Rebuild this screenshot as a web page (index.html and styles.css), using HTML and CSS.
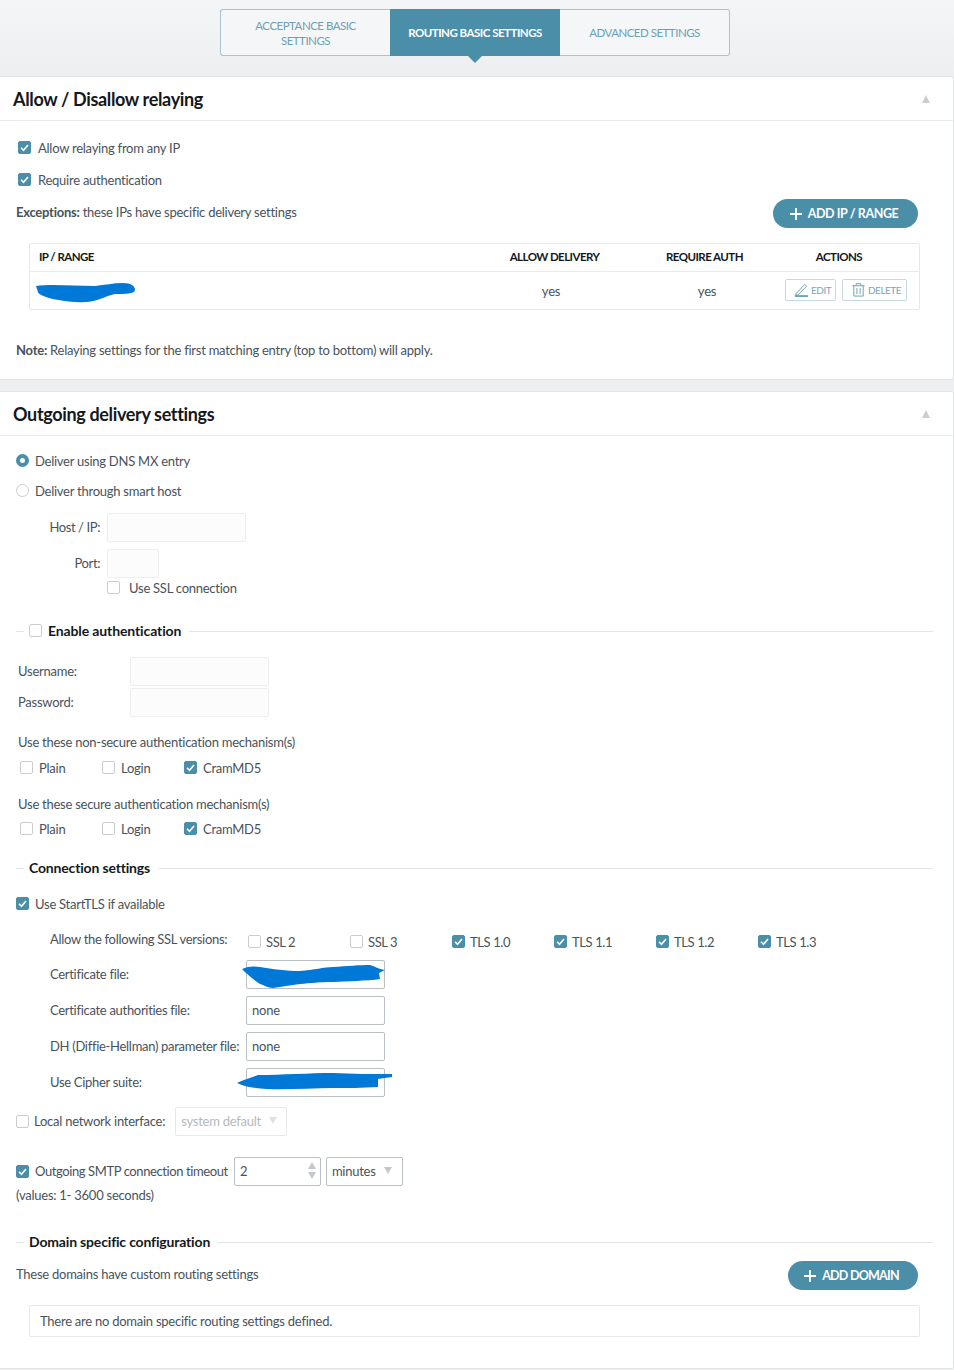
FILE: index.html
```html
<!DOCTYPE html>
<html lang="en">
<head>
<meta charset="utf-8">
<title>Routing basic settings</title>
<link rel="stylesheet" href="styles.css">
</head>
<body>
<nav class="tabs">
  <a class="tab">ACCEPTANCE BASIC<br>SETTINGS</a>
  <a class="tab tab-active">ROUTING BASIC SETTINGS</a>
  <a class="tab">ADVANCED SETTINGS</a>
</nav>

<section class="panel panel-relay">
  <header class="panel-head"><h2>Allow / Disallow relaying</h2><span class="collapse"></span></header>
  <div class="relay-body">
    <label class="row indent-2"><span class="cb on"><svg viewBox="0 0 13 13"><path d="M3 6.8l2.5 2.5L10 4"/></svg></span>Allow relaying from any IP</label>
    <label class="row indent-2 mt-12"><span class="cb on"><svg viewBox="0 0 13 13"><path d="M3 6.8l2.5 2.5L10 4"/></svg></span>Require authentication</label>
    <div class="row-between exceptions">
      <p class="lift"><b>Exceptions:</b> these IPs have specific delivery settings</p>
      <button class="pill pill-ip"><svg viewBox="0 0 14 14"><path d="M7 1v12M1 7h12"/></svg>ADD IP / RANGE</button>
    </div>
    <div class="grid-table">
      <div class="cell-head left">IP / RANGE</div>
      <div class="cell-head">ALLOW DELIVERY</div>
      <div class="cell-head">REQUIRE AUTH</div>
      <div class="cell-head actions-head">ACTIONS</div>
      <div class="cell cell-ip"><svg class="scrib-ip" viewBox="0 0 100 20"><path d="M1 3C15 1 40 3 60 3 70 2 78 0 88 0 96 0 100 3 100 7 100 11 90 11 80 11 70 13 62 19 50 19 38 20 22 17 14 15 8 13 3 11 3 9Z"/></svg></div>
      <div class="cell yes-a">yes</div>
      <div class="cell yes-b">yes</div>
      <div class="cell cell-actions">
        <button class="mini mini-edit"><svg viewBox="0 0 16 16"><path d="M2 12.5 11.5 2.5l2 2L4 14H2z"/><path class="base" d="M1 15h14"/></svg>EDIT</button>
        <button class="mini mini-del"><svg viewBox="0 0 16 16"><path d="M1.5 4h13M5.5 4V1.8h5V4M3 4v11h10V4M6.3 6.5v6.5M9.7 6.5v6.5"/></svg>DELETE</button>
      </div>
    </div>
    <p class="note"><b>Note:</b> Relaying settings for the first matching entry (top to bottom) will apply.</p>
  </div>
</section>

<section class="panel panel-out">
  <header class="panel-head"><h2>Outgoing delivery settings</h2><span class="collapse"></span></header>
  <div class="out-body">
    <label class="row radio-first"><span class="radio on"></span>Deliver using DNS MX entry</label>
    <label class="row mt-10"><span class="radio"></span>Deliver through smart host</label>

    <div class="host-row"><span class="host-label">Host / IP:</span><span class="input faint w-139"></span></div>
    <div class="host-row port-row"><span class="host-label">Port:</span><span class="input faint w-52"></span></div>
    <label class="row ssl-row"><span class="cb"></span>Use SSL connection</label>

    <div class="legend legend-auth"><span class="cb"></span><strong>Enable authentication</strong></div>

    <div class="cred-row cred-first"><span class="cred-label">Username:</span><span class="input faint w-139"></span></div>
    <div class="cred-row cred-second"><span class="cred-label">Password:</span><span class="input faint w-139"></span></div>

    <p class="mech-title mech-title-1">Use these non-secure authentication mechanism(s)</p>
    <div class="mech-row mech-row-1">
      <label class="mech"><span class="cb"></span>Plain</label>
      <label class="mech"><span class="cb"></span>Login</label>
      <label class="mech"><span class="cb on"><svg viewBox="0 0 13 13"><path d="M3 6.8l2.5 2.5L10 4"/></svg></span>CramMD5</label>
    </div>
    <p class="mech-title mech-title-2">Use these secure authentication mechanism(s)</p>
    <div class="mech-row mech-row-2">
      <label class="mech"><span class="cb"></span>Plain</label>
      <label class="mech"><span class="cb"></span>Login</label>
      <label class="mech"><span class="cb on"><svg viewBox="0 0 13 13"><path d="M3 6.8l2.5 2.5L10 4"/></svg></span>CramMD5</label>
    </div>

    <div class="legend legend-conn"><strong>Connection settings</strong></div>

    <label class="row starttls"><span class="cb on"><svg viewBox="0 0 13 13"><path d="M3 6.8l2.5 2.5L10 4"/></svg></span>Use StartTLS if available</label>

    <div class="ssl-versions">
      <span class="ssl-title">Allow the following SSL versions:</span>
      <label class="ver"><span class="cb"></span>SSL 2</label>
      <label class="ver"><span class="cb"></span>SSL 3</label>
      <label class="ver"><span class="cb on"><svg viewBox="0 0 13 13"><path d="M3 6.8l2.5 2.5L10 4"/></svg></span>TLS 1.0</label>
      <label class="ver"><span class="cb on"><svg viewBox="0 0 13 13"><path d="M3 6.8l2.5 2.5L10 4"/></svg></span>TLS 1.1</label>
      <label class="ver"><span class="cb on"><svg viewBox="0 0 13 13"><path d="M3 6.8l2.5 2.5L10 4"/></svg></span>TLS 1.2</label>
      <label class="ver"><span class="cb on"><svg viewBox="0 0 13 13"><path d="M3 6.8l2.5 2.5L10 4"/></svg></span>TLS 1.3</label>
    </div>

    <div class="file-grid">
      <span class="file-label">Certificate file:</span>
      <span class="input dark w-139 scrib-host"><svg class="scrib-cert" viewBox="0 0 143 24"><path d="M0 5C6 2 12 2 18 3 30 5 45 7 58 7 72 6 82 3 91 3 105 2 118 1 128 1 132 2 136 5 143 6L137 9 138 15C125 17 105 17 91 18 78 18 68 19 58 20 48 21 40 23 31 24 26 24 22 21 18 20 12 16 6 11 0 5Z"/></svg></span>
      <span class="file-label">Certificate authorities file:</span>
      <span class="input dark w-139">none</span>
      <span class="file-label">DH (Diffie-Hellman) parameter file:</span>
      <span class="input dark w-139">none</span>
      <span class="file-label">Use Cipher suite:</span>
      <span class="input dark w-139 scrib-host"><svg class="scrib-cipher" viewBox="0 0 155 18"><path d="M0 11C6 8 14 6 21 3 45 3 72 1 96 1 115 2 135 2 155 2L155 5C150 6 145 6 141 7L141 15C125 16 110 16 96 16 75 16 50 18 30 17 18 16 8 15 0 11Z"/></svg></span>
    </div>

    <div class="row local-row">
      <span class="cb"></span><span class="local-text">Local network interface:</span>
      <span class="select disabled w-112">system default<i class="tri"></i></span>
    </div>

    <div class="row timeout-row">
      <span class="cb on"><svg viewBox="0 0 13 13"><path d="M3 6.8l2.5 2.5L10 4"/></svg></span><span class="timeout-text">Outgoing SMTP connection timeout</span>
      <span class="input dark w-87 spin">2<span class="spinner"><i class="up"></i><i class="tri"></i></span></span>
      <span class="select w-77">minutes<i class="tri"></i></span>
    </div>
    <p class="values">(values: 1- 3600 seconds)</p>

    <div class="legend legend-domain"><strong>Domain specific configuration</strong></div>
    <div class="row-between domains">
      <p class="lift">These domains have custom routing settings</p>
      <button class="pill pill-domain"><svg viewBox="0 0 14 14"><path d="M7 1v12M1 7h12"/></svg>ADD DOMAIN</button>
    </div>
    <div class="empty-box">There are no domain specific routing settings defined.</div>
  </div>
</section>
</body>
</html>
```

FILE: styles.css
```css
* { box-sizing: border-box; }
html, body { margin: 0; padding: 0; }
body {
  height: 1370px;
  overflow: hidden;
  background: linear-gradient(#f4f5f7 0, #edeff1 70px);
  font: 13px/20px Lato, "Open Sans", sans-serif;
  letter-spacing: -0.25px;
  color: #49525b;
}
p { margin: 0; }
b, strong { font-weight: 700; }
.lift { margin-bottom: 3px; }

.tabs {
  display: flex;
  width: 510px;
  height: 47px;
  margin: 0 0 0 220px;
  position: relative;
  top: 9px;
}
.tab {
  width: 170px;
  display: flex;
  align-items: center;
  justify-content: center;
  text-align: center;
  font-size: 11.5px;
  line-height: 15px;
  letter-spacing: -0.5px;
  color: #6f9fb3;
  background: #f4f6f8;
  border: 1px solid #a9c3cf;
}
.tab:first-child { border-right: 0; border-radius: 3px 0 0 3px; }
.tab:last-child { border-left: 0; border-radius: 0 3px 3px 0; }
.tab-active {
  position: relative;
  background: #4b8ea8;
  border-color: #4b8ea8;
  color: #fff;
  font-weight: 700;
}
.tab-active::after {
  content: "";
  position: absolute;
  left: 77px;
  bottom: -8px;
  border: 7px solid transparent;
  border-bottom: 0;
  border-top: 7px solid #4b8ea8;
}

.panel {
  width: 954px;
  background: #fff;
  border: 1px solid #e2e5e7;
  border-left: 0;
  border-radius: 0 3px 3px 0;
}
.panel-relay { margin-top: 29px; height: 304px; }
.panel-out { margin-top: 11px; height: 978px; }
.panel-head {
  height: 44px;
  padding: 0 23px 0 13px;
  display: flex;
  align-items: center;
  justify-content: space-between;
  border-bottom: 1px solid #e8eaec;
}
.panel-head h2 {
  margin: 0;
  font-size: 18px;
  font-weight: 700;
  letter-spacing: -0.35px;
  color: #14181c;
}
.collapse {
  border: 4.5px solid transparent;
  border-top: 0;
  border-bottom: 8px solid #c9ced2;
  margin-top: 1px;
}

.row { display: flex; align-items: center; height: 20px; }
.row-between { display: flex; align-items: center; justify-content: space-between; }
.indent-2 { margin-left: 2px; }
.indent-2 .cb { margin-right: 7px; }
.mt-12 { margin-top: 12px; }
.mt-10 { margin-top: 10px; }

.cb {
  flex: none;
  width: 13px;
  height: 13px;
  margin-right: 8px;
  margin-bottom: 1px;
  border: 1px solid #c9cdd0;
  border-radius: 2px;
  background: #fff;
  display: inline-block;
}
.cb.on { background: #4b8ea8; border-color: #4b8ea8; position: relative; }
.cb svg { display: block; width: 13px; height: 13px; margin: -1px; }
.cb path { fill: none; stroke: #fff; stroke-width: 1.6; }
.radio {
  flex: none;
  width: 13px;
  height: 13px;
  margin-right: 6px;
  margin-bottom: 1px;
  border: 1px solid #c9cdd0;
  border-radius: 50%;
  background: #fff;
}
.radio.on { border: 4px solid #4b8ea8; }

.relay-body { padding: 17px 35px 0 16px; }
.exceptions { margin-top: 9px; height: 29px; }
.pill {
  display: flex;
  align-items: center;
  justify-content: center;
  height: 29px;
  padding: 1px 4px 0 0;
  border: 0;
  border-radius: 15px;
  background: #4b8ea8;
  color: #fff;
  font: 700 12.5px/20px Lato, "Open Sans", sans-serif;
  letter-spacing: -0.4px;
}
.pill svg { width: 14px; height: 14px; margin-right: 5px; }
.pill path { fill: none; stroke: #fff; stroke-width: 1.8; }
.pill-ip { width: 145px; }
.pill-domain { width: 130px; letter-spacing: -0.75px; }

.grid-table {
  display: grid;
  grid-template-columns: 447px 155px 145px 142px;
  grid-template-rows: 28px 37px;
  width: 891px;
  margin: 15px 0 0 13px;
  border: 1px solid #e6e8ea;
  border-radius: 2px;
}
.cell-head {
  display: flex;
  align-items: center;
  justify-content: center;
  padding-bottom: 2px;
  font-size: 11.5px;
  font-weight: 700;
  letter-spacing: -0.55px;
  color: #14181c;
  border-bottom: 1px solid #e8eaec;
}
.actions-head { padding-right: 18px; }
.left { justify-content: flex-start; padding-left: 9px; }
.cell { display: flex; align-items: center; justify-content: center; }
.cell-ip { justify-content: flex-start; padding: 4px 0 0 5px; }
.yes-a { padding-right: 7px; }
.yes-b { padding-left: 5px; }
.cell-actions { justify-content: flex-start; gap: 6px; padding: 0 0 2px 8px; }
.scrib-ip { width: 100px; height: 20px; display: block; }
.scrib-ip path, .scrib-cert path, .scrib-cipher path { fill: #0078d7; }
.mini {
  display: flex;
  align-items: center;
  height: 22px;
  padding: 0;
  border: 1px solid #c6d8e0;
  border-radius: 2px;
  background: #fff;
  color: #7ba5b7;
  font: 400 10px/20px Lato, "Open Sans", sans-serif;
  letter-spacing: -0.5px;
}
.mini svg { width: 15px; height: 15px; margin-right: 2px; }
.mini path { fill: none; stroke: #6e9db1; stroke-width: 1; }
.mini path.base { stroke: #4b8ea8; stroke-width: 1.6; }
.mini-edit { width: 51px; padding-left: 8px; }
.mini-del { width: 65px; padding-left: 8px; }
.note { margin-top: 30px; }

.out-body { padding: 0 0 0 16px; }
.radio-first { margin-top: 15px; }
.host-row { display: flex; align-items: center; margin-top: 12px; height: 29px; }
.port-row { margin-top: 7px; }
.host-label { width: 84px; text-align: right; margin: 0 7px 2px 0; letter-spacing: -0.4px; }
.input {
  display: inline-flex;
  align-items: center;
  height: 29px;
  padding: 0 5px 2px;
  flex: none;
  border-radius: 2px;
}
.faint { background: #fcfcfc; border: 1px solid #eceeef; }
.dark { border: 1px solid #b9bfc4; background: #fff; color: #49525b; }
.w-139 { width: 139px; }
.w-52 { width: 52px; }
.w-87 { width: 87px; }
.ssl-row { margin: 0 0 0 91px; }
.ssl-row .cb { margin-right: 9px; }

.legend {
  display: flex;
  align-items: center;
  height: 20px;
  width: 917px;
  font-size: 14px;
  letter-spacing: -0.17px;
  color: #14181c;
}
.legend::before {
  content: "";
  width: 8px;
  height: 1px;
  margin-right: 5px;
  background: #e2e4e6;
}
.legend::after {
  content: "";
  flex: 1;
  height: 1px;
  margin-left: 8px;
  background: #e2e4e6;
}
.legend .cb { margin-right: 6px; }
.legend-auth { margin-top: 23px; }
.legend-auth strong { letter-spacing: -0.12px; }
.legend-conn { margin-top: 0; }
.legend-domain { margin-top: 27px; }

.cred-row { display: flex; align-items: center; height: 29px; padding-left: 2px; }
.cred-first { margin-top: 16px; }
.cred-second { margin-top: 2px; }
.cred-label { width: 112px; margin-bottom: 2px; }
.mech-title { margin-left: 2px; height: 20px; }
.mech-title-1 { margin-top: 15px; }
.mech-title-2 { margin-top: 16px; }
.mech-row { display: flex; margin-left: 4px; height: 20px; }
.mech-row-1 { margin-top: 6px; }
.mech-row-2 { margin-top: 5px; }
.mech { display: flex; align-items: center; width: 82px; }
.mech .cb { margin-right: 6px; }
.mech-row + .mech-title-2 { margin-top: 16px; }
.mech-row-2 + .legend-conn { margin-top: 19px; }

.starttls { margin-top: 16px; }
.starttls .cb { margin-right: 6px; }
.ssl-versions { display: flex; align-items: flex-start; margin: 15px 0 0 34px; height: 24px; }
.ssl-title { width: 198px; line-height: 20px; letter-spacing: -0.3px; }
.ver { display: flex; align-items: center; width: 102px; height: 20px; margin-top: 3px; letter-spacing: -0.4px; }
.ver .cb { margin-right: 5px; }

.file-grid {
  display: grid;
  grid-template-columns: 196px 139px;
  grid-auto-rows: 29px;
  row-gap: 7px;
  align-items: center;
  margin: 7px 0 0 34px;
}
.file-label { margin-bottom: 2px; letter-spacing: -0.3px; }
.scrib-host { position: relative; }
.scrib-cert { position: absolute; left: -5px; top: 3px; width: 143px; height: 24px; }
.scrib-cipher { position: absolute; left: -10px; top: 3px; width: 155px; height: 18px; }

.local-row { margin-top: 10px; height: 29px; }
.local-row .cb { margin-right: 5px; }
.local-text { margin: 0 10px 2px 0; }
.select {
  position: relative;
  display: inline-flex;
  align-items: center;
  height: 29px;
  padding: 0 5px 2px;
  flex: none;
  background: #fff;
  border: 1px solid #b9bfc4;
  border-radius: 2px;
}
.select.disabled { border-color: #e6e8ea; color: #b4b9bd; }
.select.disabled .tri { border-top-color: #dfe2e4; }
.w-112 { width: 112px; }
.w-77 { width: 77px; margin-left: 5px; }
.tri {
  display: block;
  border: 4px solid transparent;
  border-bottom: 0;
  border-top: 7px solid #c4c8cb;
  margin-left: 8px;
}
.timeout-row { margin-top: 21px; height: 29px; }
.timeout-row .cb { margin-right: 6px; }
.timeout-text { letter-spacing: -0.4px; margin-bottom: 2px; }
.timeout-row .input { margin-left: 6px; position: relative; }
.spinner { position: absolute; right: 4px; top: 4px; display: flex; flex-direction: column; gap: 3px; }
.spinner .up {
  display: block;
  border: 4px solid transparent;
  border-top: 0;
  border-bottom: 7px solid #c4c8cb;
}
.spinner .tri { margin: 0; }
.values { margin-top: -1px; height: 20px; }
.domains { margin-top: 9px; height: 29px; width: 902px; }
.empty-box {
  width: 891px;
  height: 32px;
  margin: 15px 0 0 13px;
  padding: 0 0 1px 10px;
  display: flex;
  align-items: center;
  border: 1px solid #e6e8ea;
  border-radius: 2px;
}
```
